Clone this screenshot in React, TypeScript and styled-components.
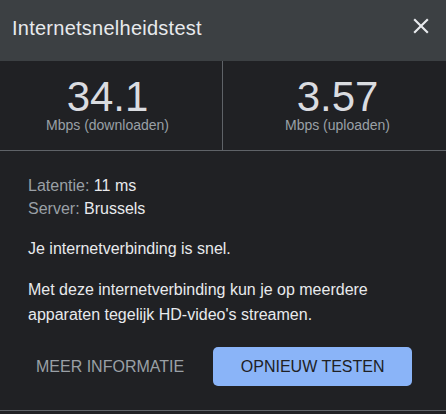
import React from 'react';
import styled, { createGlobalStyle } from 'styled-components';

const GlobalStyle = createGlobalStyle`
  html, body {
    margin: 0;
    padding: 0;
    background: #202124;
  }
  body {
    font-family: "Liberation Sans", Arial, sans-serif;
    color: #e8eaed;
  }
  * {
    box-sizing: border-box;
  }
`;

const Dialog = styled.div`
  width: 446px;
  background: #202124;
`;

const Header = styled.div`
  height: 61px;
  background: #3c4043;
  display: flex;
  align-items: flex-start;
  justify-content: space-between;
  padding: 16px 12px 0 12px;
`;

const Title = styled.h1`
  margin: 0;
  font-size: 20px;
  line-height: 24px;
  font-weight: 400;
  letter-spacing: 0.25px;
  color: #e8eaed;
`;

const CloseButton = styled.button`
  margin-top: -3px;
  width: 26px;
  height: 26px;
  padding: 0;
  border: none;
  background: none;
  color: #e8eaed;
  cursor: pointer;
  display: flex;
`;

const Speeds = styled.div`
  display: grid;
  grid-template-columns: 223px 1fr;
  border-bottom: 1px solid #5f6368;
`;

const SpeedColumn = styled.div<{ $divider?: boolean }>`
  display: flex;
  flex-direction: column;
  align-items: center;
  padding: ${({ $divider }) => ($divider ? '16px 7px 17px 0' : '16px 0 17px 6px')};
  border-right: ${({ $divider }) => ($divider ? '1px solid #5f6368' : 'none')};
`;

const SpeedValue = styled.div`
  font-size: 42px;
  line-height: 40px;
  color: #dadce0;
`;

const SpeedUnit = styled.div`
  font-size: 14px;
  line-height: 16px;
  color: #9aa0a6;
`;

const Details = styled.div`
  padding: 23px 28px 0;
`;

const InfoRow = styled.div`
  font-size: 16px;
  line-height: 23px;
`;

const InfoLabel = styled.span`
  color: #9aa0a6;
`;

const InfoValue = styled.span`
  color: #e8eaed;
`;

const Paragraph = styled.p`
  margin: 16px 0 0;
  font-size: 16px;
  line-height: 25px;
  color: #e8eaed;
`;

const Actions = styled.div`
  display: flex;
  align-items: center;
  gap: 21px;
  padding: 20px 0 24px 28px;
  border-bottom: 1px solid #5f6368;
`;

const ActionButton = styled.button<{ $primary?: boolean }>`
  font-family: "Liberation Sans", Arial, sans-serif;
  font-size: 16px;
  text-transform: uppercase;
  height: 39px;
  border: none;
  border-radius: 5px;
  cursor: pointer;
  padding: ${({ $primary }) => ($primary ? '0' : '0 8px')};
  width: ${({ $primary }) => ($primary ? '199px' : 'auto')};
  background: ${({ $primary }) => ($primary ? '#8ab4f8' : 'transparent')};
  color: ${({ $primary }) => ($primary ? '#202124' : '#9aa0a6')};
`;

const CloseIcon = () => (
  <svg width="26" height="26" viewBox="0 0 24 24" fill="currentColor">
    <path d="M19 6.41L17.59 5 12 10.59 6.41 5 5 6.41 10.59 12 5 17.59 6.41 19 12 13.41 17.59 19 19 17.59 13.41 12z" />
  </svg>
);

export default function App() {
  return (
    <>
      <GlobalStyle />
      <Dialog>
        <Header>
          <Title>Internetsnelheidstest</Title>
          <CloseButton aria-label="Sluiten">
            <CloseIcon />
          </CloseButton>
        </Header>

        <Speeds>
          <SpeedColumn $divider>
            <SpeedValue>34.1</SpeedValue>
            <SpeedUnit>Mbps (downloaden)</SpeedUnit>
          </SpeedColumn>
          <SpeedColumn>
            <SpeedValue>3.57</SpeedValue>
            <SpeedUnit>Mbps (uploaden)</SpeedUnit>
          </SpeedColumn>
        </Speeds>

        <Details>
          <InfoRow>
            <InfoLabel>Latentie: </InfoLabel>
            <InfoValue>11 ms</InfoValue>
          </InfoRow>
          <InfoRow>
            <InfoLabel>Server: </InfoLabel>
            <InfoValue>Brussels</InfoValue>
          </InfoRow>
          <Paragraph>Je internetverbinding is snel.</Paragraph>
          <Paragraph>
            Met deze internetverbinding kun je op meerdere apparaten tegelijk HD-video's streamen.
          </Paragraph>
        </Details>

        <Actions>
          <ActionButton>Meer informatie</ActionButton>
          <ActionButton $primary>Opnieuw testen</ActionButton>
        </Actions>
      </Dialog>
    </>
  );
}
